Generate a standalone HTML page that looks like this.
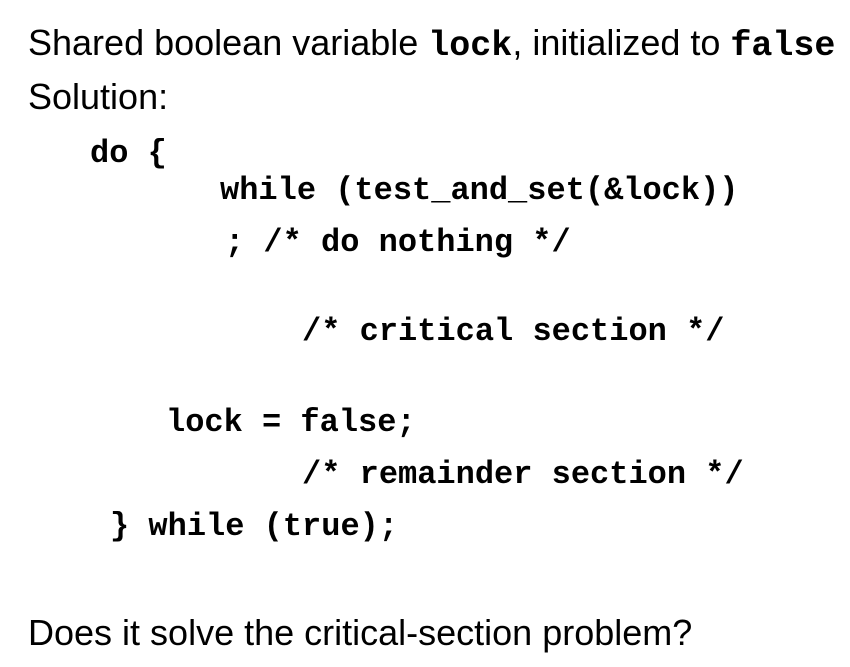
<!DOCTYPE html>
<html><head><meta charset="utf-8"><style>
body{margin:0;width:850px;height:667px;background:#fff;position:relative;overflow:hidden;color:#000}
.t{position:absolute;font-family:"Liberation Sans",sans-serif;font-size:36px;line-height:36px;white-space:pre}
.t b{font-family:"Liberation Mono",monospace;font-size:35px;font-weight:bold}
.c{position:absolute;font-family:"Liberation Mono",monospace;font-weight:bold;font-size:32px;line-height:32px;white-space:pre}
</style></head><body>
<div class="t" style="left:28px;top:25px">Shared boolean variable <b>lock</b>, initialized to <b>false</b></div>
<div class="t" style="left:28px;top:79px">Solution:</div>
<div class="c" style="left:90px;top:138px">do {</div>
<div class="c" style="left:220px;top:175px">while (test_and_set(&amp;lock))</div>
<div class="c" style="left:225px;top:227px">; /* do nothing */</div>
<div class="c" style="left:302px;top:316px">/* critical section */</div>
<div class="c" style="left:166px;top:407px">lock = false;</div>
<div class="c" style="left:302px;top:459px">/* remainder section */</div>
<div class="c" style="left:110px;top:511px">} while (true);</div>
<div class="t" style="left:28px;top:615px">Does it solve the critical-section problem?</div>
</body></html>
